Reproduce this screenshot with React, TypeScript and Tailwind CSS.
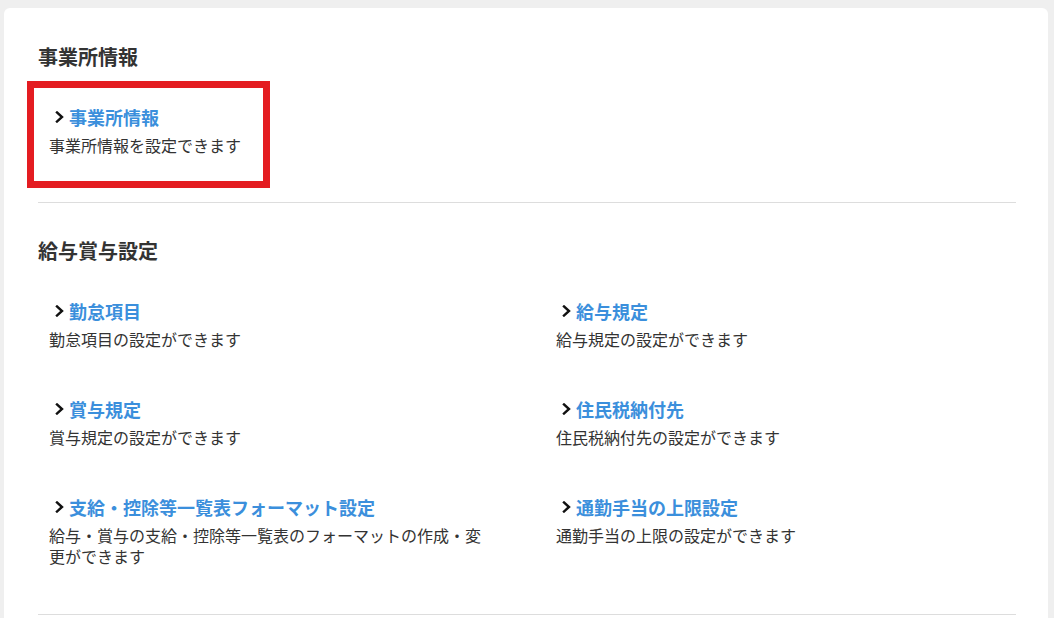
import React from "react";

type Item = { title: string; desc: string };

const payrollItems: Item[] = [
  { title: "勤怠項目", desc: "勤怠項目の設定ができます" },
  { title: "給与規定", desc: "給与規定の設定ができます" },
  { title: "賞与規定", desc: "賞与規定の設定ができます" },
  { title: "住民税納付先", desc: "住民税納付先の設定ができます" },
  { title: "支給・控除等一覧表フォーマット設定", desc: "給与・賞与の支給・控除等一覧表のフォーマットの作成・変更ができます" },
  { title: "通勤手当の上限設定", desc: "通勤手当の上限の設定ができます" },
];

const Chevron = () => (
  <svg width="9" height="12" viewBox="0 0 9 12" className="shrink-0">
    <polyline points="2,1.5 7,6 2,10.5" fill="none" stroke="#111" strokeWidth="2.4" strokeLinecap="square" />
  </svg>
);

const SettingLink = ({ title, desc }: Item) => (
  <div>
    <a href="#" className="flex items-center gap-[5px] pl-[6px] text-[18px] leading-[26px] font-bold text-[#3b8fdc]">
      <Chevron />
      <span>{title}</span>
    </a>
    <p className="mt-[5px] text-[16px] leading-[21px] text-[#333]">{desc}</p>
  </div>
);

export default function App() {
  return (
    <div
      className="min-h-screen bg-[#efefef] pt-2 pl-1 pr-[6px]"
      style={{ fontFamily: '"Noto Sans CJK JP", "Noto Sans", sans-serif' }}
    >
      <div className="bg-white rounded-md pl-[34px] pr-[32px] pt-[35px] pb-8">
        {/* 事業所情報 */}
        <section>
          <h2 className="text-[20px] leading-[28px] font-bold text-[#333]">事業所情報</h2>
          <div className="mt-[10px] -ml-[11px] w-[243px] border-[7px] border-[#e41c21] pl-[15px] pt-[16px] pb-[25px]">
            <SettingLink title="事業所情報" desc="事業所情報を設定できます" />
          </div>
        </section>

        <hr className="mt-[14px] border-0 border-t border-[#dddddd]" />

        {/* 給与賞与設定 */}
        <section className="mt-[34px]">
          <h2 className="text-[20px] leading-[28px] font-bold text-[#333]">給与賞与設定</h2>
          <div className="mt-[18px] grid grid-cols-2 gap-x-[36px] gap-y-[6px]">
            {payrollItems.map((item) => (
              <div key={item.title} className="pl-[11px] pr-[22px] pt-[15px] pb-[25px]">
                <SettingLink {...item} />
              </div>
            ))}
          </div>
        </section>

        <hr className="mt-[22px] border-0 border-t border-[#dddddd]" />
      </div>
    </div>
  );
}
